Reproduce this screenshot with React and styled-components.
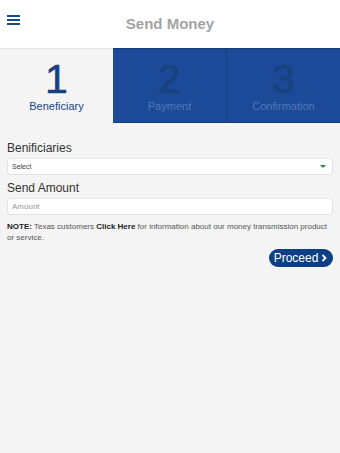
import React from "react";
import styled, { createGlobalStyle } from "styled-components";

const GlobalStyle = createGlobalStyle`
  html, body {
    margin: 0;
    padding: 0;
    background: #f4f4f4;
    font-family: "Liberation Sans", Arial, sans-serif;
  }
  * { box-sizing: border-box; }
`;

const Page = styled.div`
  width: 340px;
  min-height: 453px;
  background: #f4f4f4;
`;

const Header = styled.header`
  position: relative;
  height: 48px;
  background: #ffffff;
  display: flex;
  align-items: center;
  justify-content: center;
  padding-bottom: 2px;
`;

const MenuButton = styled.div`
  position: absolute;
  left: 7px;
  top: 15px;
  width: 13px;
  display: flex;
  flex-direction: column;
  gap: 2px;
`;

const MenuLine = styled.span`
  display: block;
  height: 2px;
  background: #1d4a87;
`;

const Title = styled.h1`
  margin: 0;
  font-size: 15px;
  font-weight: bold;
  color: #a3a3a3;
`;

const Steps = styled.nav`
  display: grid;
  grid-template-columns: 113px 113px 114px;
  height: 75px;
`;

const Step = styled.div`
  display: flex;
  flex-direction: column;
  align-items: center;
  padding-top: 12px;
  background: ${(p) => (p.$active ? "#f4f4f4" : "#1c4a98")};
  border-top: 1px solid ${(p) => (p.$active ? "#e6e6e6" : "#163a73")};
  border-left: ${(p) => (p.$divider ? "1px solid #173f80" : "none")};
  border-bottom: ${(p) => (p.$active ? "none" : "1px solid #163f82")};
`;

const StepNumber = styled.span`
  font-size: 41px;
  line-height: 36px;
  -webkit-text-stroke: 0.6px currentColor;
  color: ${(p) => (p.$active ? "#1b3f80" : "#18417f")};
`;

const StepLabel = styled.span`
  margin-top: 3px;
  font-size: 11px;
  color: ${(p) => (p.$active ? "#1c4587" : "#5177b8")};
`;

const Form = styled.form`
  padding: 18px 7px 0;
  display: flex;
  flex-direction: column;
`;

const Label = styled.label`
  font-size: 12px;
  color: #333333;
  margin-bottom: 3px;
`;

const Field = styled.div`
  height: 17px;
  background: #ffffff;
  border: 1px solid #e2e2e2;
  border-radius: 3px;
  display: flex;
  align-items: center;
  justify-content: space-between;
  padding: 0 6px 0 4px;
  margin-bottom: ${(p) => p.$gap || 0}px;
  font-size: ${(p) => (p.$small ? 7 : 8)}px;
  color: ${(p) => (p.$small ? "#444444" : "#999999")};
`;

const Caret = styled.span`
  width: 0;
  height: 0;
  border-left: 3px solid transparent;
  border-right: 3px solid transparent;
  border-top: 3px solid #2e8a3e;
`;

const Note = styled.p`
  margin: 6px 0 0;
  font-size: 8px;
  line-height: 11px;
  color: #555555;

  b { color: #222222; }
`;

const Actions = styled.div`
  display: flex;
  justify-content: flex-end;
  margin-top: 6px;
`;

const Proceed = styled.button`
  height: 18px;
  width: 64px;
  border: none;
  border-radius: 9px;
  background: #0c3f85;
  color: #ffffff;
  font-family: "Liberation Sans", Arial, sans-serif;
  font-size: 12px;
  padding: 0;
  display: flex;
  align-items: center;
  justify-content: center;
  gap: 3px;
`;

export default function App() {
  return (
    <>
      <GlobalStyle />
      <Page>
        <Header>
          <MenuButton>
            <MenuLine />
            <MenuLine />
            <MenuLine />
          </MenuButton>
          <Title>Send Money</Title>
        </Header>
        <Steps>
          <Step $active>
            <StepNumber $active>1</StepNumber>
            <StepLabel $active>Beneficiary</StepLabel>
          </Step>
          <Step>
            <StepNumber>2</StepNumber>
            <StepLabel>Payment</StepLabel>
          </Step>
          <Step $divider>
            <StepNumber>3</StepNumber>
            <StepLabel>Confirmation</StepLabel>
          </Step>
        </Steps>
        <Form>
          <Label>Benificiaries</Label>
          <Field $small $gap={6}>
            <span>Select</span>
            <Caret />
          </Field>
          <Label>Send Amount</Label>
          <Field>
            <span>Amount</span>
          </Field>
          <Note>
            <b>NOTE:</b> Texas customers <b>Click Here</b> for information about our money transmission product or service.
          </Note>
          <Actions>
            <Proceed type="button">
              Proceed
              <svg width="7" height="8" viewBox="0 0 7 8">
                <path d="M1.5 1 L4.5 4 L1.5 7" stroke="#fff" strokeWidth="1.8" fill="none" />
              </svg>
            </Proceed>
          </Actions>
        </Form>
      </Page>
    </>
  );
}
